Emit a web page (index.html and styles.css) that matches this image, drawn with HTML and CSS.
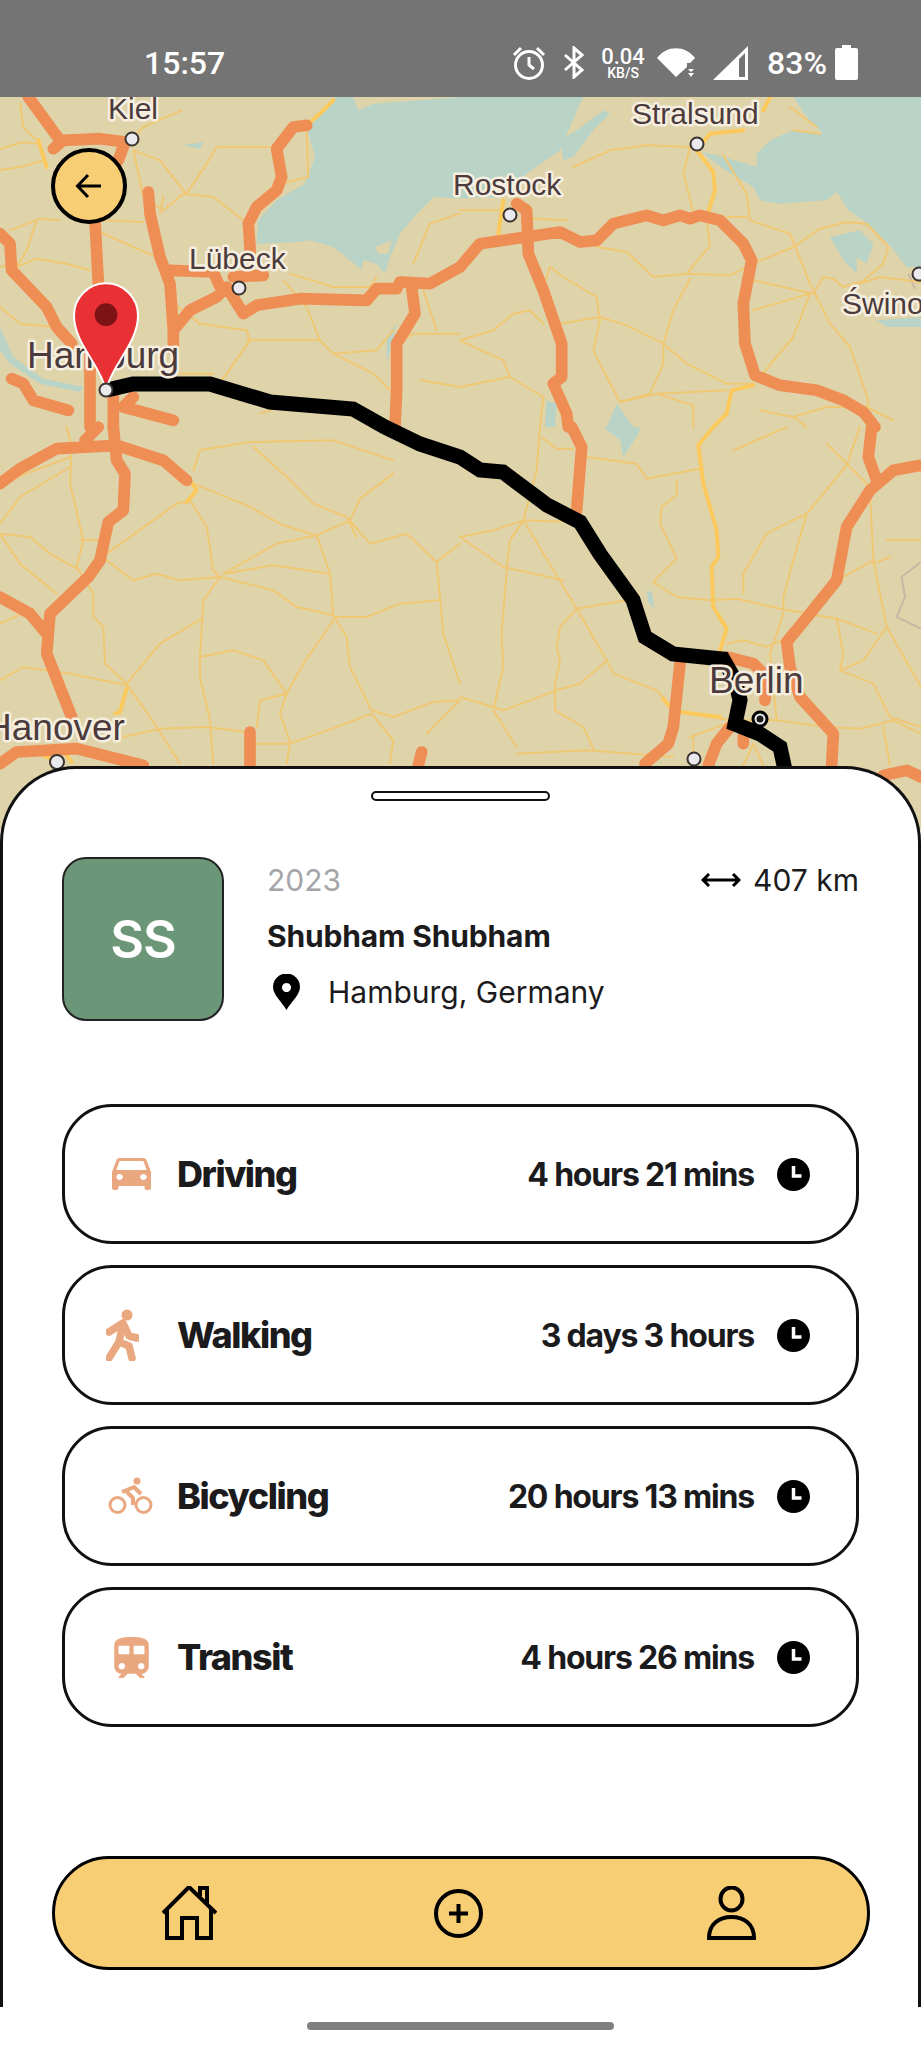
FILE: index.html
```html
<!DOCTYPE html>
<html lang="en">
<head>
  <meta charset="UTF-8" />
  <meta name="viewport" content="width=device-width, initial-scale=1.0" />
  <title>Trip details</title>
  <link rel="stylesheet" href="styles.css">
</head>
<body>
  <div class="status-bar">
    <span class="status-time">15:57</span>
    <div class="status-icons">
      <svg class="ic-alarm" viewBox="0 0 34 34"><circle cx="17" cy="19" r="13.5"/><path d="M17 11v8l5 4M2 9l7-7M32 9l-7-7"/></svg>
      <svg class="ic-bt" viewBox="0 0 21 33"><path d="M2 9l17 15-8 7V2l8 7L2 24"/></svg>
      <div class="status-speed"><span>0.04</span><small>KB/S</small></div>
      <svg class="ic-wifi" viewBox="0 0 38 29"><path d="M0 10C10 -3 28 -3 38 10L33 15 30 15 30 19 19 29ZM31 21H37L34 24ZM31 25H37L34 29Z"/></svg>
      <svg class="ic-signal" viewBox="0 0 35 34"><path fill-rule="evenodd" d="M35 0V34H0ZM32 7L26 13V31H32Z"/></svg>
      <span class="status-pct">83%</span>
      <svg class="ic-battery" viewBox="0 0 23 35"><path d="M7 0h9v3h5a2 2 0 0 1 2 2v28a2 2 0 0 1-2 2H2a2 2 0 0 1-2-2V5a2 2 0 0 1 2-2h5z"/></svg>
    </div>
  </div>

  <div class="map">
    <svg class="map-canvas" viewBox="0 97 921 733">
      <rect x="0" y="97" width="921" height="733" class="land"/>

      <!-- top left -->
      <g transform="translate(0 97) scale(.33333)">
        <path class="water" d="M480 0L550 40 640 75 700 110 740 145 800 125 870 85 920 75 960 45 1000 10 1010 0 1060 0 1075 40 1120 20 1380 0V305L1300 300 1250 350 1200 410 1170 480 1155 530 1130 500 1090 490 1085 520 1050 490 1000 450 930 430 890 435 770 440 775 370 830 310 915 260 945 180 920 90 870 85 800 125 740 145 700 110 640 75 550 40Z"/>
        <path class="land-patch" d="M1125 450L1175 430 1165 470 1135 470Z"/>
        <path class="water" d="M0 690L40 780 130 845 250 870 240 885 120 860 30 800 0 760ZM550 145L610 135 600 155ZM1160 720L1190 680 1175 740 1160 800Z"/>
        <path class="road-minor" d="M60 20L70 90 110 130M0 155L70 135 115 140M0 220L60 210 130 190M400 160L480 190 550 280 560 290 620 200 650 150 810 150M400 160L430 300 490 340 550 290 640 300 730 370M30 400L120 365 180 370M310 370L430 375M110 370L80 460 50 510 110 485 200 500 270 520M300 405L400 450 470 480M545 40L430 90 390 130M920 100L925 240 840 260M480 350L490 300M870 530L1000 570 1110 570 1130 540M850 550L920 630 960 730 1000 770 1130 760 1180 700M520 620L600 680 740 700 750 730 680 830 640 880M740 730L960 730M1240 500L1290 380 1380 350M1380 710L1240 710 1190 740M1270 580L1310 700M0 630L60 680 160 690M540 830L640 830M1000 770L1120 830 1170 880M1260 850L1380 870M780 950L840 930M0 510L20 505"/>
        <path class="road-mid" d="M115 130L140 210M920 85L960 50 1000 10"/>
        <path class="road-major" d="M85 0L180 130M160 155L190 130 300 125 375 135 355 190M285 370L295 560M445 285L450 350 480 480 510 560 520 700 520 760M0 410L30 440 35 520 140 630 170 690 215 740M520 700L570 640 650 600 680 570 730 650 770 625 900 605 1100 610 1130 575 1190 575 1200 555 1290 560 1380 510M510 520L640 525 660 570M790 535L700 540M920 85L880 90 830 155 845 240 830 280 770 330 745 380 750 450 750 480M1235 570L1245 650 1190 740 1190 880 1185 990M35 845L70 860 100 910 205 940M270 740L270 990M340 900L340 990M400 900L370 930 520 970"/>
      </g>

      <!-- top right -->
      <g transform="translate(460 97) scale(.33333)">
        <path class="water" d="M0 0H370L360 20 300 160 200 230 130 300 0 305Z"/>
        <path class="water" d="M300 130L350 100 430 40 450 50 400 100 340 180 310 190Z"/>
        <path class="water" d="M1000 0L1040 60 1090 110 1000 100 930 130 890 170 890 210 790 180 725 165 790 215 880 270 900 310 960 320 1100 310 1130 285 1165 340 1230 385 1285 440 1340 510H1383V0Z"/>
        <path class="water" d="M1110 420L1200 400 1240 440 1220 500 1190 480 1190 530 1150 490ZM1250 670L1383 660V690L1280 690ZM260 910L290 920 285 990H255ZM470 920L520 990H440Z"/>
        <path class="border" d="M1345 530L1365 575"/>
        <path class="road-minor" d="M340 210L450 160 560 145 690 150 670 230 700 345M0 340L120 340M220 365L320 370M410 450L500 465 580 540 680 530 810 535 850 515M740 370L750 445 680 530M690 545L640 640 610 740 610 800 570 890 480 915 420 800 400 760 420 670 410 600 310 540 270 510 250 570M300 680L420 660 500 685 610 740 680 800 800 860 880 860M0 730L100 700 160 650 210 640 250 680M0 730L130 790 150 840 0 870M150 840L250 900 240 990M480 915L590 890 700 925 700 990M590 890L800 880M790 175L860 290 870 370 990 410 1050 560 1110 680 1170 750 1225 910 1220 940M1220 380L1285 450 1270 500 1200 560 1260 540 1383 555M880 500L1000 450 1080 395 1160 375 1220 380M880 550L1060 590 1090 540 1120 545 1150 570 1200 555M880 640L1050 590 1000 720 900 840M800 360L860 360M1000 960L1100 930 1220 930 1300 970M900 940L1000 960 1040 990M990 30L1070 90M1000 100L1080 110"/>
        <path class="road-mid" d="M930 0L910 40M850 100L750 110 710 160 760 225 765 280 745 345M130 310L115 410M880 865L815 880 800 950 760 990"/>
        <path class="road-major" d="M0 510L60 440 300 405 360 435 410 430 460 380 560 355 610 370 660 355 690 365 720 355 780 370 850 440 875 490 850 620 855 740 885 835 960 865 1070 880 1150 910 1210 945 1245 990M170 320L200 340 205 470 250 580 305 740 305 840 280 860 320 950 325 990"/>
      </g>

      <!-- bottom left -->
      <g transform="translate(0 427) scale(.33333)">
        <path class="road-minor" d="M200 0L215 60 210 170 250 340 230 420 280 500 280 570 310 600 315 710 380 770M0 320L90 330 150 380 240 430M0 320L60 410 170 500M240 340L320 340M320 380L530 230 570 220 620 300 640 430 660 450 610 520 600 690 600 750 630 880 640 1010M320 400L400 460 470 440 540 460 660 450M670 440L830 350 950 325 1050 280 1080 215 1180 140M670 440L820 415 990 440 1000 570M660 450L820 490 890 540 1000 565 1040 630 1050 720 1115 850 1180 870 1300 825 1380 820M1000 570L1100 570 1200 530 1315 520M1000 580L910 710 860 800 780 820 770 900M605 575L480 650 380 770 470 900 540 1010M600 690L700 670 790 700 860 800 840 860 870 945 860 1010M370 930L480 905 620 900 740 915M770 950L870 950 1010 900 1115 860 1180 940 1170 1010M1280 920L1380 820M0 760L70 720 210 740 380 775M580 130L600 70 750 45 1000 40 1180 100M760 60L860 150 940 230 1040 270 1110 350 1220 320 1310 405 1380 350M1310 405L1330 620 1380 770M1040 270L1070 330M580 170L740 235 850 295 950 325M950 325L990 440M0 590L100 545M0 170L210 90M210 120L60 210 0 290"/>
        <path class="road-mid" d="M570 160L590 190 560 225M380 785L360 855 345 860M130 985L160 1000M200 985L215 1005"/>
        <path class="road-major" d="M0 170L60 125 170 65 350 55 490 100 560 160M255 40L295 0M340 0L350 100 375 140 370 250 325 285 300 400 265 450 150 560 140 680 215 870M0 510L90 560 140 620M0 1010L50 975 230 965 430 1015M750 915V1015M1265 975L1255 1015"/>
      </g>

      <!-- bottom right -->
      <g transform="translate(460 427) scale(.33333)">
        <path class="water" d="M430 0H540L535 20 490 90 480 40ZM560 490L575 495 585 550 565 525Z"/>
        <path class="road-minor" d="M240 0L230 130 190 280 150 340 140 430 125 620 130 720 100 850 170 960M245 30L290 65 340 65M380 90L530 110 560 155 720 125M650 160L650 205 605 240 600 290 650 395 580 465 650 510 750 520 830 515 960 545 1130 575 1250 620M1160 115L1040 260 920 320 850 440 850 500M1040 260L1000 400 970 510 970 560 930 680M820 70L980 0M1100 50L1160 110 1230 180M1160 115L1200 0M1230 190L1240 400 1280 600 1210 700 1140 730 1240 770 1290 870 1383 900M1240 400L1130 460M1280 340H1383M1290 390L1240 410M0 330L100 310 190 280 340 285M0 330L130 420 310 460M190 280L350 545 440 700 430 710 360 770 290 790 130 850 0 810M350 545L500 520M350 545L300 600 290 660 300 700 285 770 285 850 370 900 400 965M440 700L460 740 590 790 635 840M170 980L380 970 640 990M800 650L850 640 920 660 990 630M660 855L810 880 950 880 1100 900 1200 905 1300 880 1383 920M930 680L950 880M1130 575L1150 680 1140 730M850 1015L880 950 910 1015M690 930L800 890M700 930V990M1280 600L1383 780M1270 900L1290 1015"/>
        <path class="border" d="M1383 405L1325 450 1335 510 1310 570 1383 605"/>
        <path class="road-mid" d="M760 0L715 55 730 170 770 310 775 390 755 420 760 540 800 605 780 670M610 815L630 840M660 855L780 870"/>
        <path class="road-major" d="M335 0L365 60 350 250M1235 0L1225 90 1250 160M1383 115L1300 130 1230 190 1160 300 1130 460 1050 560 980 645 990 720 1020 810 1120 920 1115 1015M660 710L640 900 625 950 555 1010M800 690L880 710 920 750 915 820M810 900L770 950 745 1015M850 930V950M1270 1045L1340 1030 1383 1050"/>
      </g>

      <path class="route" d="M107 390L133 384 210 384 270 402 353 409 385 427 420 444 460 457 480 470 503 472 547 505 580 522 600 554 633 600 645 637 673 654 723 659 735 680 740 700 735 724 760 734 780 747 785 770"/>

      <g class="city">
        <circle cx="132" cy="139" r="6.5"/>
        <circle cx="697" cy="144" r="6.5"/>
        <circle cx="510" cy="215" r="6.5"/>
        <circle cx="239" cy="288" r="6.5"/>
        <circle cx="57" cy="762" r="7"/>
        <circle cx="694" cy="759" r="6.5"/>
        <circle cx="919" cy="274" r="6.5"/>
      </g>
      <circle class="city-ring" cx="760" cy="719" r="7"/>
      <circle class="city-core" cx="760" cy="719" r="3.5"/>

      <text class="map-label" x="108" y="119">Kiel</text>
      <text class="map-label" x="632" y="124">Stralsund</text>
      <text class="map-label" x="453" y="195">Rostock</text>
      <text class="map-label" x="189" y="269">Lübeck</text>
      <text class="map-label" x="842" y="314">Świno</text>
      <text class="map-label map-label-big" x="27" y="368">Hamburg</text>
      <text class="map-label map-label-big" x="709" y="693">Berlin</text>
      <text class="map-label map-label-big" x="-15" y="740">Hanover</text>

      <g transform="translate(0 97) scale(.33333)">
        <path class="pin" d="M318 880C300 800 222 740 222 655A96 96 0 0 1 414 655C414 740 336 800 318 880Z"/>
        <circle class="pin-dot" cx="318" cy="653" r="34"/>
      </g>
      <circle class="city" cx="106" cy="390" r="6.5"/>
    </svg>
    <button class="back-btn">
      <svg viewBox="0 0 28 28"><path d="M26 14H3M13 3L2.500 14 13 25"/></svg>
    </button>
  </div>

  <div class="sheet">
    <div class="handle"></div>

    <div class="trip">
      <div class="avatar">SS</div>
      <div class="trip-info">
        <div class="trip-top">
          <span class="trip-year">2023</span>
          <span class="trip-dist">
            <svg viewBox="0 0 40 14"><path d="M3 7H37M8 1L2 7l6 6M32 1l6 6-6 6"/></svg>
            407 km
          </span>
        </div>
        <div class="trip-name">Shubham Shubham</div>
        <div class="trip-place">
          <svg viewBox="0 0 27 36"><path fill-rule="evenodd" d="M13.500 36C9 28 0 21 0 13a13.500 13.500 0 0 1 27 0C27 21 18 28 13.500 36ZM13.500 9a4.500 4.500 0 1 0 .01 0Z"/></svg>
          <span>Hamburg, Germany</span>
        </div>
      </div>
    </div>

    <div class="modes">
      <div class="mode">
        <span class="mode-icon">
          <svg class="ic-car" viewBox="3 5 18 16" preserveAspectRatio="none"><path d="M18.920 6.010C18.720 5.420 18.160 5 17.500 5h-11c-.66 0-1.210.42-1.420 1.010L3 12v8c0 .55.45 1 1 1h1c.55 0 1-.45 1-1v-1h12v1c0 .55.45 1 1 1h1c.55 0 1-.45 1-1v-8l-2.080-5.990zM6.500 16c-.83 0-1.500-.67-1.500-1.500S5.670 13 6.500 13s1.500.67 1.500 1.500S7.330 16 6.500 16zm11 0c-.83 0-1.500-.67-1.500-1.500s.67-1.500 1.500-1.500 1.500.67 1.500 1.500-.67 1.500-1.500 1.500zM5 11l1.500-4.500h11L19 11H5z"/></svg>
        </span>
        <span class="mode-name">Driving</span>
        <span class="mode-time">4 hours 21 mins</span>
        <svg class="clock" viewBox="0 0 33 33"><circle cx="16.500" cy="16.500" r="16.500"/><path d="M16.500 8v10h8"/></svg>
      </div>
      <div class="mode">
        <span class="mode-icon">
          <svg class="ic-walk" viewBox="0 0 33 52"><circle cx="21" cy="6" r="5.500"/><path d="M3 23L17 14 13 33 3 49M17 14L23 27 31 29M13 33L23 37 26 49"/></svg>
        </span>
        <span class="mode-name">Walking</span>
        <span class="mode-time">3 days 3 hours</span>
        <svg class="clock" viewBox="0 0 33 33"><circle cx="16.500" cy="16.500" r="16.500"/><path d="M16.500 8v10h8"/></svg>
      </div>
      <div class="mode">
        <span class="mode-icon">
          <svg class="ic-bike" viewBox="0 0 46 38"><circle class="wheel" cx="9.500" cy="28" r="7.500"/><circle class="wheel" cx="35.500" cy="28" r="7.500"/><circle class="head" cx="29" cy="4" r="3.500"/><path class="rider" d="M14 15L26 10 33 17M18 14L25 21V28"/></svg>
        </span>
        <span class="mode-name">Bicycling</span>
        <span class="mode-time">20 hours 13 mins</span>
        <svg class="clock" viewBox="0 0 33 33"><circle cx="16.500" cy="16.500" r="16.500"/><path d="M16.500 8v10h8"/></svg>
      </div>
      <div class="mode">
        <span class="mode-icon">
          <svg class="ic-train" viewBox="4 2 16 19"><path d="M12 2c-4 0-8 .5-8 4v9.500C4 17.430 5.570 19 7.500 19L6 20.500v.5h2.230l2-2H14l2 2h2v-.5L16.500 19c1.930 0 3.500-1.570 3.500-3.500V6c0-3.500-3.580-4-8-4zM7.500 17c-.83 0-1.500-.67-1.500-1.500S6.670 14 7.500 14s1.500.67 1.500 1.500S8.330 17 7.500 17zm3.500-7H6V6h5v4zm2 0V6h5v4h-5zm3.500 7c-.83 0-1.500-.67-1.500-1.500s.67-1.500 1.500-1.500 1.500.67 1.500 1.500-.67 1.500-1.500 1.500z"/></svg>
        </span>
        <span class="mode-name">Transit</span>
        <span class="mode-time">4 hours 26 mins</span>
        <svg class="clock" viewBox="0 0 33 33"><circle cx="16.500" cy="16.500" r="16.500"/><path d="M16.500 8v10h8"/></svg>
      </div>
    </div>

    <nav class="tabbar">
      <svg class="ic-home" viewBox="0 0 55 54"><path d="M1 27L27 1 54 27M5 23V52H20V32H35V52H49V23M38 10V2H45V18"/></svg>
      <svg class="ic-plus" viewBox="0 0 49 49"><circle cx="24.500" cy="24.500" r="22.500"/><path d="M24.500 15V34M15 24.500H34"/></svg>
      <svg class="ic-user" viewBox="0 0 49 54"><ellipse cx="24.500" cy="13" rx="11" ry="11.500"/><path d="M2 52C2 38 12 31 24.500 31S47 38 47 52Z"/></svg>
    </nav>
  </div>

  <div class="gesture-bar"><div class="gesture-pill"></div></div>
</body>
</html>
```

FILE: styles.css
```css
* {
  box-sizing: border-box;
}
body {
  margin: 0;
  width: 921px;
  height: 2048px;
  overflow: hidden;
  background: #ffffff;
  font-family: Inter, "Liberation Sans", sans-serif;
  color: #1b1b1d;
}

/* status bar */
.status-bar {
  height: 97px;
  padding: 28px 63px 0 144px;
  display: flex;
  justify-content: space-between;
  align-items: center;
  background: #747474;
  color: #ffffff;
  font-family: Roboto, sans-serif;
}
.status-time {
  font-size: 32px;
  font-weight: 500;
}
.status-icons {
  display: flex;
  align-items: center;
  gap: 17px;
}
.status-icons svg {
  display: block;
}
.ic-alarm {
  width: 34px;
  height: 34px;
  fill: none;
  stroke: #ffffff;
  stroke-width: 3;
}
.ic-bt {
  width: 21px;
  height: 33px;
  fill: none;
  stroke: #ffffff;
  stroke-width: 3;
}
.status-speed {
  width: 44px;
  display: flex;
  flex-direction: column;
  align-items: center;
  font-size: 22px;
  line-height: 20px;
  font-weight: 500;
}
.status-speed small {
  font-size: 14px;
  line-height: 12px;
}
.ic-wifi {
  width: 38px;
  height: 29px;
  margin-left: -5px;
  fill: #ffffff;
}
.ic-signal {
  width: 35px;
  height: 34px;
  margin-left: 1px;
  fill: #ffffff;
}
.status-pct {
  margin-left: 2px;
  font-size: 32px;
  font-weight: 500;
}
.ic-battery {
  width: 23px;
  height: 35px;
  margin-left: -9px;
  fill: #ffffff;
}

/* map */
.map {
  position: relative;
  height: 733px;
}
.map-canvas {
  display: block;
  width: 921px;
  height: 733px;
}
.land {
  fill: #dfd3aa;
}
.land-patch {
  fill: #dfd3aa;
}
.water {
  fill: #b9d3c6;
}
.border {
  fill: none;
  stroke: #c8b8a6;
  stroke-width: 6;
}
.road-minor,
.road-mid,
.road-major,
.route {
  fill: none;
  stroke-linecap: round;
  stroke-linejoin: round;
}
.road-minor {
  stroke: #f0c873;
  stroke-width: 6;
}
.road-mid {
  stroke: #fbc95c;
  stroke-width: 12;
}
.road-major {
  stroke: #ee8e55;
  stroke-width: 35;
}
.route {
  stroke: #000000;
  stroke-width: 15;
  stroke-linecap: butt;
  stroke-linejoin: miter;
}
.city,
.city circle {
  fill: #e9e9ee;
  stroke: #3a3330;
  stroke-width: 2;
}
.city-ring {
  fill: #e9e9ee;
  stroke: #000000;
  stroke-width: 3;
}
.city-core {
  fill: #1a1a1a;
}
.map-label {
  font-family: "Liberation Sans", sans-serif;
  font-size: 30px;
  fill: #4c3b3c;
  stroke: #f6efe0;
  stroke-width: 5px;
  stroke-linejoin: round;
  paint-order: stroke;
}
.map-label-big {
  font-size: 37px;
}
.pin {
  fill: #e93135;
  stroke: #ffffff;
  stroke-width: 6;
}
.pin-dot {
  fill: #7c1314;
}
.back-btn {
  position: absolute;
  left: 51px;
  top: 51px;
  width: 76px;
  height: 76px;
  padding: 0;
  display: flex;
  align-items: center;
  justify-content: center;
  background: #f8ce75;
  border: 4px solid #000000;
  border-radius: 50%;
}
.back-btn svg {
  width: 28px;
  height: 28px;
  fill: none;
  stroke: #000000;
  stroke-width: 3;
}

/* bottom sheet */
.sheet {
  position: relative;
  height: 1241px;
  margin-top: -64px;
  padding: 22px 59px 0;
  background: #ffffff;
  border: 3px solid #111111;
  border-bottom: none;
  border-radius: 76px 76px 0 0;
}
.handle {
  width: 179px;
  height: 10px;
  margin: 0 auto;
  background: #ffffff;
  border: 2.5px solid #111111;
  border-radius: 5px;
}
.trip {
  display: flex;
  margin-top: 56px;
}
.avatar {
  width: 162px;
  height: 164px;
  display: flex;
  align-items: center;
  justify-content: center;
  background: #6b9678;
  border: 2px solid #222222;
  border-radius: 24px;
  color: #ffffff;
  font-size: 52px;
  font-weight: 600;
  letter-spacing: -0.02em;
}
.trip-info {
  flex: 1;
  margin-left: 43px;
  display: flex;
  flex-direction: column;
  gap: 10px;
}
.trip-top,
.trip-name,
.trip-place {
  height: 46px;
  display: flex;
  align-items: center;
}
.trip-top {
  justify-content: space-between;
}
.trip-year {
  font-size: 30px;
  font-weight: 400;
  color: #a5a5a9;
}
.trip-dist {
  display: flex;
  align-items: center;
  gap: 12px;
  font-size: 30px;
  font-weight: 400;
}
.trip-dist svg {
  width: 40px;
  height: 14px;
  fill: none;
  stroke: #000000;
  stroke-width: 3;
}
.trip-name {
  font-size: 30px;
  font-weight: 700;
  letter-spacing: -0.005em;
}
.trip-place {
  gap: 28px;
  font-size: 30px;
  font-weight: 400;
}
.trip-place svg {
  width: 27px;
  height: 36px;
  margin-left: 6px;
  fill: #000000;
}

/* travel modes */
.modes {
  margin-top: 83px;
  display: flex;
  flex-direction: column;
  gap: 21px;
}
.mode {
  height: 140px;
  padding: 0 46px 0 43px;
  display: flex;
  align-items: center;
  background: #ffffff;
  border: 3px solid #111111;
  border-radius: 50px;
}
.mode-icon {
  width: 46px;
  margin-right: 23px;
  display: flex;
  justify-content: center;
}
.mode-icon svg {
  display: block;
}
.ic-car {
  width: 39px;
  height: 32px;
  fill: #e9a87f;
}
.ic-walk {
  width: 33px;
  height: 52px;
  margin-left: -17px;
  fill: #e9a87f;
  stroke: #e9a87f;
}
.ic-walk path {
  fill: none;
  stroke-width: 7.5;
  stroke-linecap: round;
  stroke-linejoin: round;
}
.ic-walk circle {
  stroke: none;
}
.ic-bike {
  width: 46px;
  height: 38px;
}
.ic-bike .wheel {
  fill: none;
  stroke: #e9a87f;
  stroke-width: 3;
}
.ic-bike .head {
  fill: #e9a87f;
}
.ic-bike .rider {
  fill: none;
  stroke: #e9a87f;
  stroke-width: 4;
  stroke-linejoin: round;
}
.ic-train {
  width: 35px;
  height: 41px;
  fill: #e9a87f;
}
.mode-name {
  flex: 1;
  font-size: 36px;
  font-weight: 800;
  letter-spacing: -0.04em;
}
.mode-time {
  font-size: 32px;
  font-weight: 700;
  letter-spacing: -0.037em;
}
.clock {
  width: 33px;
  height: 33px;
  margin-left: 23px;
}
.clock circle {
  fill: #000000;
}
.clock path {
  fill: none;
  stroke: #ffffff;
  stroke-width: 3.5;
}

/* tab bar */
.tabbar {
  height: 114px;
  margin: 129px -11px 0 -10px;
  display: grid;
  grid-template-columns: repeat(3, 1fr);
  place-items: center;
  background: #f8ce75;
  border: 3px solid #000000;
  border-radius: 57px;
}
.tabbar svg {
  display: block;
  fill: none;
  stroke: #000000;
  stroke-width: 4;
}
.ic-home {
  width: 55px;
  height: 54px;
  margin-right: 2px;
}
.ic-plus {
  width: 49px;
  height: 49px;
  margin-right: 4px;
}
.ic-user {
  width: 49px;
  height: 54px;
}

/* gesture bar */
.gesture-bar {
  height: 41px;
  padding-top: 15px;
  background: #ffffff;
}
.gesture-pill {
  width: 307px;
  height: 8px;
  margin: 0 auto;
  background: #808080;
  border-radius: 4px;
}
```
